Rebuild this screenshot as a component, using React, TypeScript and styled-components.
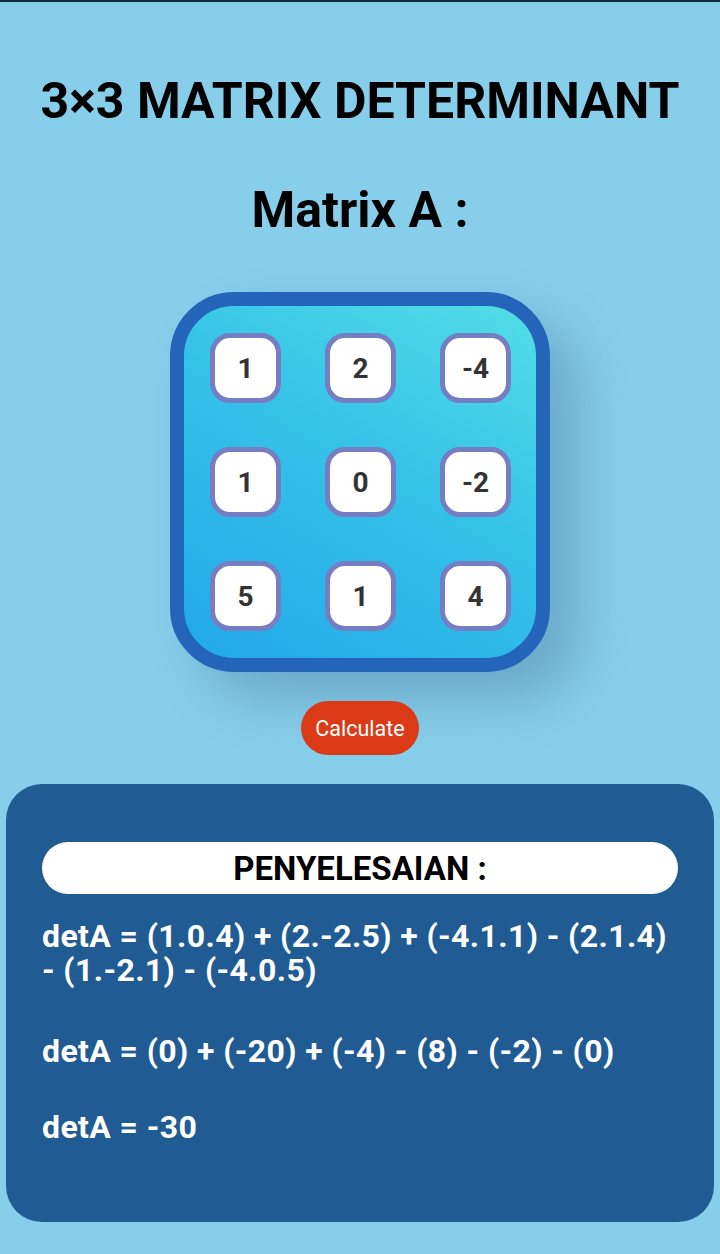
import * as React from "react"
import styled, { createGlobalStyle } from "styled-components"

const GlobalStyle = createGlobalStyle`
  html, body {
    margin: 0;
    padding: 0;
    background: #87ceea;
    font-family: Roboto, "Liberation Sans", sans-serif;
  }
`

const Page = styled.div`
  min-height: 1254px;
  border-top: 2px solid #0f2a3c;
  box-sizing: border-box;
  display: flex;
  flex-direction: column;
  align-items: center;
  padding: 0 6px 32px;
`

const Title = styled.h1`
  margin: 72px 0 0;
  font-size: 50px;
  font-weight: 700;
  color: #000;
  line-height: 54px;
  white-space: nowrap;
`

const Subtitle = styled.h2`
  margin: 54px 0 0;
  font-size: 50px;
  font-weight: 700;
  color: #000;
  line-height: 56px;
`

const MatrixBox = styled.div`
  margin-top: 54px;
  width: 380px;
  height: 380px;
  box-sizing: border-box;
  border: 14px solid #2565b9;
  border-radius: 64px;
  background: linear-gradient(30deg, #22a8e9 0%, #35c2e8 55%, #52dee6 100%);
  box-shadow: 30px 28px 50px rgba(40, 80, 120, 0.28);
  display: grid;
  grid-template-columns: repeat(3, 71px);
  grid-template-rows: repeat(3, 71px);
  column-gap: 44px;
  row-gap: 43px;
  padding: 27px 0 0 26px;
`

const Cell = styled.div`
  box-sizing: border-box;
  width: 71px;
  height: 70px;
  border: 5px solid #767dc2;
  border-radius: 20px;
  background: #fff;
  display: flex;
  align-items: center;
  justify-content: center;
  font-size: 28px;
  font-weight: 700;
  color: #333;
`

const CalcButton = styled.button`
  margin-top: 29px;
  width: 118px;
  height: 54px;
  border: none;
  border-radius: 27px;
  background: #dc3a17;
  color: #fff;
  font-family: Roboto, "Liberation Sans", sans-serif;
  font-size: 21.5px;
  padding: 0;
`

const Panel = styled.div`
  margin-top: 29px;
  width: 708px;
  height: 438px;
  box-sizing: border-box;
  background: #205b94;
  border-radius: 36px;
  padding: 58px 36px 0;
`

const HeaderPill = styled.div`
  height: 52px;
  border-radius: 26px;
  background: #fff;
  display: flex;
  align-items: center;
  justify-content: center;
`

const HeaderText = styled.span`
  font-size: 33px;
  font-weight: 700;
  color: #000;
  white-space: nowrap;
`

const Line = styled.p<{ $gap: number }>`
  margin: ${p => p.$gap}px 0 0;
  color: #fff;
  font-size: 32px;
  font-weight: 700;
  letter-spacing: 0.4px;
  line-height: 34px;
`

const matrix = [
  [1, 2, -4],
  [1, 0, -2],
  [5, 1, 4],
]

export default function App() {
  return (
    <>
      <GlobalStyle />
      <Page>
        <Title>3×3 MATRIX DETERMINANT</Title>
        <Subtitle>Matrix A :</Subtitle>
        <MatrixBox>
          {matrix.flat().map((v, i) => (
            <Cell key={i}>{v}</Cell>
          ))}
        </MatrixBox>
        <CalcButton>Calculate</CalcButton>
        <Panel>
          <HeaderPill>
            <HeaderText>PENYELESAIAN :</HeaderText>
          </HeaderPill>
          <Line $gap={25}>
            detA = (1.0.4) + (2.-2.5) + (-4.1.1) - (2.1.4) - (1.-2.1) - (-4.0.5)
          </Line>
          <Line $gap={47}>detA = (0) + (-20) + (-4) - (8) - (-2) - (0)</Line>
          <Line $gap={42}>detA = -30</Line>
        </Panel>
      </Page>
    </>
  )
}
